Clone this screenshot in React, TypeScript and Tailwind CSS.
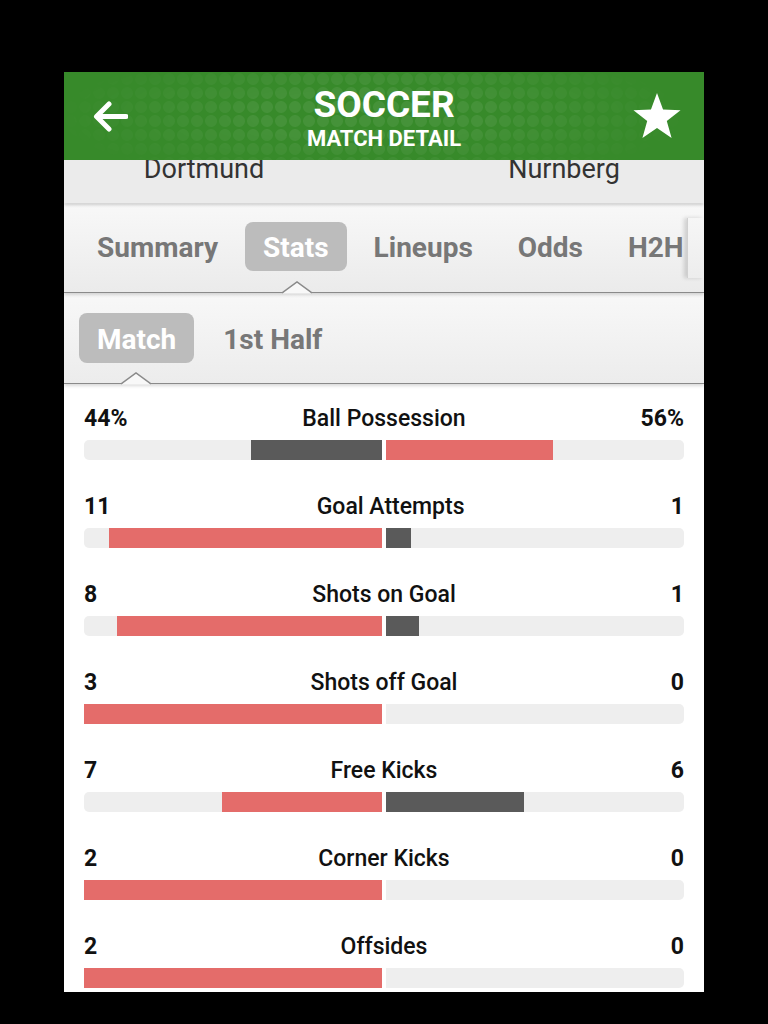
import React from "react";

const font = { fontFamily: 'Roboto, "Liberation Sans", sans-serif' };

const stats = [
  { label: "Ball Possession", home: 44, away: 56, suffix: "%" },
  { label: "Goal Attempts", home: 11, away: 1 },
  { label: "Shots on Goal", home: 8, away: 1 },
  { label: "Shots off Goal", home: 3, away: 0 },
  { label: "Free Kicks", home: 7, away: 6 },
  { label: "Corner Kicks", home: 2, away: 0 },
  { label: "Offsides", home: 2, away: 0 },
];

const tabs = ["Summary", "Stats", "Lineups", "Odds", "H2H"];

const Notch = ({ left }: { left: number }) => (
  <svg
    className="absolute bottom-[-1.5px]"
    style={{ left }}
    width="30"
    height="13"
    viewBox="0 0 30 13"
  >
    <path d="M0 12.5 L15 1 L30 12.5 Z" fill="#f8f8f8" />
    <path d="M0 12 L15 1 L30 12" fill="none" stroke="#8a8a8a" strokeWidth="1.5" />
  </svg>
);

const StatRow = ({ s }: { s: (typeof stats)[number] }) => {
  const total = s.home + s.away || 1;
  const homeRed = s.home >= s.away;
  return (
    <div className="h-[88px]">
      <div className="flex items-center justify-between h-[24px] text-[23px] text-[#111]">
        <span className="font-bold">
          {s.home}
          {s.suffix}
        </span>
        <span className="font-medium">{s.label}</span>
        <span className="font-bold">
          {s.away}
          {s.suffix}
        </span>
      </div>
      <div className="mt-[9px] flex gap-[4px] h-[20px]">
        <div className="flex-1 flex justify-end bg-[#eeeeee] rounded-l-[5px]">
          <div
            className={homeRed ? "bg-[#e46c6a]" : "bg-[#5a5a5a]"}
            style={{ width: `${(s.home / total) * 100}%` }}
          />
        </div>
        <div className="flex-1 flex bg-[#eeeeee] rounded-r-[5px]">
          <div
            className={homeRed ? "bg-[#5a5a5a]" : "bg-[#e46c6a]"}
            style={{ width: `${(s.away / total) * 100}%` }}
          />
        </div>
      </div>
    </div>
  );
};

export default function App() {
  return (
    <div className="w-[768px] h-[1024px] bg-black flex justify-center pt-[72px]" style={font}>
      <div className="w-[640px] h-[920px] overflow-hidden bg-white flex flex-col">
        {/* header */}
        <header className="relative h-[88px] shrink-0 bg-[#378a2a] grid grid-cols-[1fr_auto_1fr] items-center px-[22px] z-20">
          <div className="absolute inset-0 bg-[radial-gradient(circle,rgba(255,255,255,0.07)_5.5px,transparent_6.5px)] bg-[length:14px_14px] [mask-image:radial-gradient(ellipse_60%_100%_at_48%_50%,black_30%,transparent_85%)]" />
          <svg width="36" height="33" viewBox="0 0 36 33" className="relative ml-[6px]">
            <path d="M34 16.5H5 M17 4L4.5 16.5 17 29" fill="none" stroke="white" strokeWidth="5" strokeLinecap="round" strokeLinejoin="round" />
          </svg>
          <div className="relative flex flex-col items-center text-white font-bold mt-[6px]">
            <span className="text-[37px] leading-[34px]">SOCCER</span>
            <span className="text-[22px] leading-[22px] mt-[6px]">MATCH DETAIL</span>
          </div>
          <svg width="50" height="48" viewBox="0 0 24 23" className="relative justify-self-end">
            <path d="M12 0.5l2.9 7.9 8.4 0.3-6.6 5.2 2.3 8.1L12 17.3 5 22l2.3-8.1L0.7 8.7l8.4-0.3z" fill="white" />
          </svg>
        </header>

        {/* teams */}
        <div className="h-[43px] shrink-0 grid grid-cols-[280px_80px_280px] bg-[#ebebeb] text-[27px] text-[#333] overflow-hidden shadow-[0_2px_3px_rgba(0,0,0,0.18)] z-10">
          <div className="text-center leading-none mt-[-4px]">Dortmund</div>
          <div />
          <div className="text-center leading-none mt-[-4px]">Nurnberg</div>
        </div>

        {/* tabs */}
        <div className="relative h-[89px] shrink-0 flex bg-gradient-to-b from-[#f8f8f8] to-[#ebebeb] border-b-[1.5px] border-[#8a8a8a] shadow-[0_2px_3px_rgba(0,0,0,0.15)] z-[5] mt-[1px]">
          <div className="w-[623px] overflow-hidden flex items-center gap-[9px] pl-[15px] pb-[3px]">
            {tabs.map((t) => (
              <div
                key={t}
                className={`shrink-0 px-[18px] pt-[3px] h-[49px] flex items-center rounded-[8px] text-[28px] font-bold ${
                  t === "Stats" ? "bg-[#bcbcbc] text-white" : "text-[#777]"
                }`}
              >
                {t}
              </div>
            ))}
          </div>
          <div className="flex-1 my-[14px] border-l border-[#d0d0d0] shadow-[-3px_0_4px_rgba(0,0,0,0.15)]" />
          <Notch left={218} />
        </div>

        {/* sub tabs */}
        <div className="relative h-[91px] shrink-0 flex items-center gap-[11px] pl-[15px] bg-gradient-to-b from-[#f8f8f8] to-[#ececec] border-b-[1.5px] border-[#8a8a8a] shadow-[0_2px_3px_rgba(0,0,0,0.15)] z-[4]">
          <div className="px-[18px] pt-[4px] h-[50px] flex items-center rounded-[8px] bg-[#bcbcbc] text-white text-[28px] font-bold">
            Match
          </div>
          <div className="px-[18px] pt-[4px] h-[50px] flex items-center text-[#777] text-[28px] font-bold">1st Half</div>
          <Notch left={57} />
        </div>

        {/* stats */}
        <div className="px-[20px] pt-[23px] bg-white">
          {stats.map((s) => (
            <StatRow key={s.label} s={s} />
          ))}
        </div>
      </div>
    </div>
  );
}
